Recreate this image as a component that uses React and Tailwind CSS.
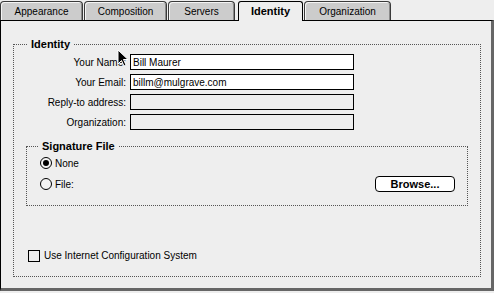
const tabs = [
  { name: "Appearance", w: "w-[83px]", ml: "ml-0" },
  { name: "Composition", w: "w-[83px]", ml: "ml-[1px]" },
  { name: "Servers", w: "w-[67px]", ml: "ml-[1px]" },
  { name: "Identity", w: "w-[65px]", ml: "ml-[3px]", active: true },
  { name: "Organization", w: "w-[87px]", ml: "ml-[1px]" },
];

const fields = [
  { label: "Your Name:", value: "Bill Maurer" },
  { label: "Your Email:", value: "billm@mulgrave.com" },
  { label: "Reply-to address:", value: "" },
  { label: "Organization:", value: "" },
];

function Tab({ tab }) {
  if (tab.active) {
    return (
      <div
        className={`${tab.w} ${tab.ml} relative z-10 -mb-px h-[20px] flex items-center justify-center bg-[#eeeeee] border-l border-t border-r border-black rounded-t-[3px] text-[11px] font-bold`}
      >
        {tab.name}
      </div>
    );
  }
  return (
    <div
      className={`${tab.w} ${tab.ml} h-[19px] flex items-center justify-center bg-[#cccccc] border-l border-t border-r border-[#3a3a3a] rounded-t-[4px] shadow-[inset_1px_1px_0_#f4f4f4,inset_-1px_0_0_#8a8a8a] text-[10px]`}
    >
      {tab.name}
    </div>
  );
}

function GroupTitle({ children, ml }) {
  return (
    <div className={`-mt-[7px] ${ml} w-fit px-[4px] bg-[#eeeeee] text-[11px] font-bold leading-[12px]`}>
      {children}
    </div>
  );
}

function Radio({ checked }) {
  return (
    <div className="w-[12px] h-[12px] rounded-full border border-black bg-[#f4f4f4] flex items-center justify-center shrink-0">
      {checked && <div className="w-[6px] h-[6px] rounded-full bg-black" />}
    </div>
  );
}

export default function App() {
  return (
    <div className="relative w-[494px] h-[293px] overflow-hidden bg-[#eeeeee] text-black font-['Liberation_Sans',Arial,sans-serif] text-[10px]">
      {/* tab strip */}
      <div className="flex items-end h-[20px]">
        {tabs.map((t) => (
          <Tab key={t.name} tab={t} />
        ))}
      </div>

      {/* panel */}
      <div className="w-[494px] h-[271px] bg-[#eeeeee] border-t border-l border-t-black border-l-black border-r-[3px] border-b-[3px] border-r-[#666666] border-b-[#666666]">
        <div className="ml-[12px] mt-[23px] w-[468px] border border-dotted border-[#555555] pb-[13px]">
          <GroupTitle ml="ml-[13px]">Identity</GroupTitle>

          <div className="mt-[4px] flex flex-col gap-[4px]">
            {fields.map((f) => (
              <div key={f.label} className="flex items-center gap-[4px]">
                <div className="w-[112px] text-right">{f.label}</div>
                <div
                  className={`w-[224px] h-[16px] border border-black pl-[2px] flex items-center ${
                    f.value ? "bg-white" : "bg-[#eeeeee]"
                  }`}
                >
                  {f.value}
                </div>
              </div>
            ))}
          </div>

          {/* signature */}
          <div className="mt-[16px] mx-[12px] border border-dotted border-[#555555] pb-[13px]">
            <GroupTitle ml="ml-[11px]">Signature File</GroupTitle>
            <div className="mt-[3px] h-[16px] pl-[13px] flex items-center gap-[3px]">
              <Radio checked />
              <span>None</span>
            </div>
            <div className="mt-[5px] h-[16px] pl-[13px] pr-[12px] flex items-center gap-[3px]">
              <Radio />
              <span>File:</span>
              <button className="ml-auto w-[80px] h-[16px] rounded-[4px] border border-black bg-white text-[11px] font-bold leading-none">
                Browse...
              </button>
            </div>
          </div>

          <div className="mt-[42px] ml-[14px] flex items-center gap-[4px]">
            <div className="w-[12px] h-[12px] border border-black" />
            <span>Use Internet Configuration System</span>
          </div>
        </div>
      </div>

      {/* mouse pointer */}
      <svg className="absolute left-[117px] top-[49px]" width="12" height="18" viewBox="0 0 12 18">
        <path d="M1 1 L1 15 L4.5 11.5 L7 17 L9 16 L6.5 10.5 L11 10.5 Z" fill="black" stroke="white" strokeWidth="1" />
      </svg>
    </div>
  );
}
